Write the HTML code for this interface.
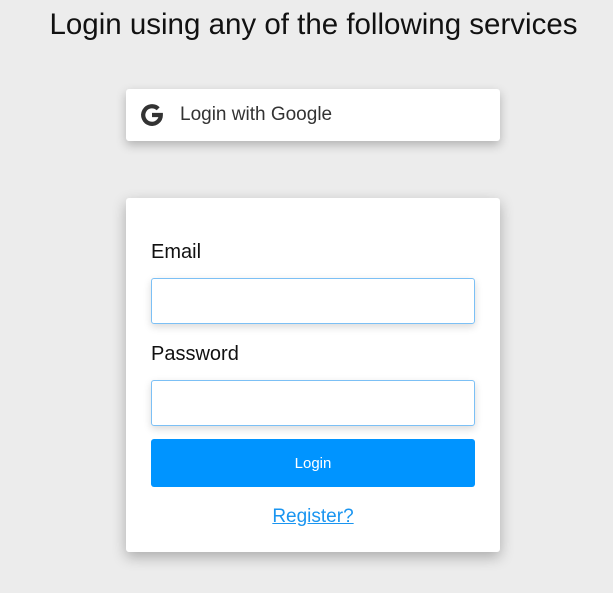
<!DOCTYPE html><html><head><style>
body{margin:0;width:613px;height:593px;background:#ececec;font-family:"Liberation Sans",sans-serif;position:relative;overflow:hidden}
.t{position:absolute;left:0;width:627px;top:8px;text-align:center;font-size:29.5px;color:#111}
.g{position:absolute;left:126px;top:89px;width:374px;height:52px;background:#fff;border-radius:3px;box-shadow:0 4px 10px rgba(0,0,0,.25)}
.g span{position:absolute;left:54px;top:15px;font-size:19px;color:#333}
.c{position:absolute;left:126px;top:198px;width:374px;height:354px;background:#fff;border-radius:3px;box-shadow:0 5px 14px rgba(0,0,0,.28)}
.l{position:absolute;left:25px;font-size:20px;color:#111}
.i{position:absolute;left:25px;width:322px;height:44px;border:1px solid #7cc0f5;border-radius:3px;box-shadow:0 3px 8px rgba(0,0,0,.15)}
.b{position:absolute;left:25px;top:241px;width:324px;height:48px;background:#0094ff;border-radius:3px;color:#fff;font-size:15px;text-align:center;line-height:50px}
.r{position:absolute;left:0;width:374px;top:308px;text-align:center;font-size:19px;color:#1a95f0;text-decoration:underline}
</style></head><body>
<div class="t">Login using any of the following services</div>
<div class="g"><svg style="position:absolute;left:13px;top:13px" width="26" height="26" viewBox="0 0 26 26"><path d="M19.2 6.8A8.8 8.8 0 1 0 21.8 13H13" fill="none" stroke="#333" stroke-width="4.2"/></svg><span>Login with Google</span></div>
<div class="c">
<div class="l" style="top:43px">Email</div>
<div class="i" style="top:80px"></div>
<div class="l" style="top:145px">Password</div>
<div class="i" style="top:182px"></div>
<div class="b">Login</div>
<div class="r">Register?</div>
</div>
</body></html>
